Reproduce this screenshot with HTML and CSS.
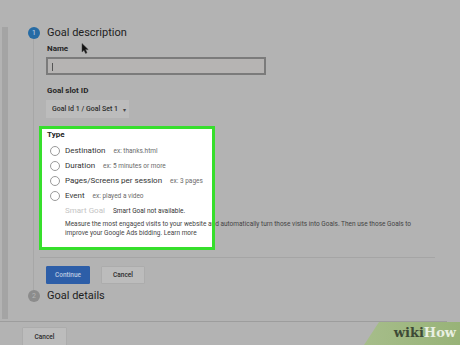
FILE: index.html
```html
<!DOCTYPE html>
<html lang="en">

<head>
    <meta charset="UTF-8">
    <meta name="viewport" content="width=device-width, initial-scale=1.0">
    <title>Goal setup</title>
    <link rel="stylesheet" href="styles.css">
</head>

<body>
    <div class="screen">
        <div class="panel">
            <div class="step-head first">
                <span class="num active">1</span>
                <h2>Goal description</h2>
            </div>
            <div class="step-body">
                <div class="field-label">Name</div>
                <div class="text-input"><span class="caret"></span></div>

                <div class="field-label slot">Goal slot ID</div>
                <div class="select">Goal Id 1 / Goal Set 1 <span class="arrow">&#9662;</span></div>

                <div class="type-box">
                    <div class="field-label">Type</div>
                    <ul class="options">
                        <li><span class="radio"></span><span class="opt">Destination</span><span class="ex">ex: thanks.html</span></li>
                        <li><span class="radio"></span><span class="opt">Duration</span><span class="ex">ex: 5 minutes or more</span></li>
                        <li><span class="radio"></span><span class="opt">Pages/Screens per session</span><span class="ex">ex: 3 pages</span></li>
                        <li><span class="radio"></span><span class="opt">Event</span><span class="ex">ex: played a video</span></li>
                    </ul>
                    <div class="smart">
                        <span class="smart-title">Smart Goal</span>
                        <span class="smart-note">Smart Goal not available.</span>
                    </div>
                    <p class="smart-desc">Measure the most engaged visits to your website and automatically turn those visits into Goals. Then use those Goals to improve your Google Ads bidding. Learn more</p>
                </div>

                <div class="divider"></div>

                <div class="actions">
                    <button class="btn primary">Continue</button>
                    <button class="btn">Cancel</button>
                </div>
            </div>
            <div class="step-head">
                <span class="num">2</span>
                <h2>Goal details</h2>
            </div>
        </div>
        <div class="rule"></div>
        <button class="btn footer-cancel">Cancel</button>
    </div>

    <!-- mouse pointer -->
    <svg class="pointer" width="8" height="11" viewBox="0 0 8 11">
        <path d="M1 0.5 L1 9 L3 7.2 L4.6 10.5 L6 9.8 L4.5 6.6 L7.2 6.6 Z" fill="#111" stroke="#444" stroke-width="0.5"/>
    </svg>

    <div class="wikihow"><span class="wiki">wiki</span><span class="how">How</span></div>
</body>

</html>
```

FILE: styles.css
```css
* {
    box-sizing: border-box;
}

body {
    margin: 0;
    width: 460px;
    height: 345px;
    overflow: hidden;
    background-color: #b3b3b3;
    color: #262626;
    font-family: Roboto, "Liberation Sans", Arial, sans-serif;
    position: relative;
}

.screen {
    padding-top: 13px;
}

.panel {
    margin-left: 2px;
    border-left: 6px solid #a4a4a4;
    width: 445px;
    height: 292px;
}

.step-head {
    display: flex;
    align-items: center;
    height: 12px;
    margin-left: 20px;
}

.step-head.first {
    margin-top: 14px;
}

.step-head h2 {
    margin: 0 0 0 7px;
    font-size: 11px;
    font-weight: 400;
    color: #1e1e1e;
    line-height: 12px;
}

.num {
    width: 12px;
    height: 12px;
    border-radius: 50%;
    background-color: #8c8c8c;
    color: #b6b6b6;
    font-size: 7px;
    display: flex;
    align-items: center;
    justify-content: center;
}

.num.active {
    background-color: #266ba4;
    color: #c9d8e8;
}

.step-body {
    margin-left: 25px;
    border-left: 1px solid #a7a7a7;
    padding: 5px 0 6px 13px;
}

.field-label {
    font-size: 8px;
    font-weight: 700;
    line-height: 10px;
    color: #262626;
}

.field-label.slot {
    margin-top: 11px;
}

.text-input {
    margin: 3px 0 0 -1px;
    width: 220px;
    height: 18px;
    border: 2px solid #7b7b7b;
    background-color: #b6b4b3;
    padding: 4px 0 0 4px;
}

.caret {
    display: block;
    width: 1px;
    height: 8px;
    background-color: #555;
}

.select {
    margin: 4px 0 0 -1px;
    width: 83px;
    height: 18px;
    background-color: #bcbcbc;
    font-size: 7px;
    font-weight: 500;
    color: #2d2d2d;
    display: flex;
    align-items: center;
    padding-left: 6px;
    white-space: nowrap;
}

.select .arrow {
    margin-left: 5px;
    font-size: 6px;
    color: #444;
}

.type-box {
    position: relative;
    margin: 8px 0 0 -8px;
    width: 176px;
    height: 124px;
    background-color: #fff;
    padding: 4px 0 0 8px;
}

.type-box::after {
    content: '';
    position: absolute;
    inset: 0;
    border: 3px solid #36df2c;
}

.options {
    list-style: none;
    margin: 3px 0 0 0;
    padding: 0;
}

.options li {
    display: flex;
    align-items: center;
    height: 15px;
    white-space: nowrap;
}

.radio {
    width: 10px;
    height: 10px;
    margin-left: 3px;
    border: 1px solid #9a9a9a;
    border-radius: 50%;
    flex-shrink: 0;
}

.opt {
    margin-left: 5px;
    font-size: 8px;
    color: #333;
}

.ex {
    margin-left: 8px;
    font-size: 6.5px;
    color: #6a6a6a;
}

.smart {
    display: flex;
    align-items: center;
    height: 15px;
    padding-left: 18px;
    white-space: nowrap;
}

.smart-title {
    font-size: 8px;
    color: #c4c4c4;
}

.smart-note {
    margin-left: 8px;
    font-size: 6.5px;
    color: #333;
}

.smart-desc {
    margin: 2px 0 0 18px;
    width: 360px;
    font-size: 6.5px;
    line-height: 9px;
    color: #444;
}

.divider {
    margin: 7px 0 0 -7px;
    width: 395px;
    height: 1px;
    background-color: #a5a5a5;
}

.actions {
    display: flex;
    gap: 11px;
    margin: 8px 0 0 -1px;
}

.btn {
    width: 44px;
    height: 18px;
    border: 1px solid #acacac;
    background-color: #bcbcbc;
    color: #2b2b2b;
    font-family: Roboto, "Liberation Sans", Arial, sans-serif;
    font-size: 6.5px;
    font-weight: 500;
    padding: 0;
    border-radius: 1px;
}

.btn.primary {
    background-color: #2d5ea8;
    border-color: #2d5ea8;
    color: #b9c9e1;
}

.rule {
    margin-top: 2px;
    width: 447px;
    height: 1px;
    background-color: #9d9d9d;
}

.footer-cancel {
    margin: 5px 0 0 22px;
    width: 45px;
    height: 19px;
}

.pointer {
    position: absolute;
    left: 81px;
    top: 43px;
}

.wikihow {
    position: absolute;
    right: 0;
    bottom: 0;
    width: 96px;
    height: 23px;
    clip-path: polygon(15px 0, 100% 0, 100% 100%, 0 100%);
    background: linear-gradient(to right, #a6bd8a, #98b378);
    font-family: "DejaVu Serif", "Liberation Serif", serif;
    font-weight: 700;
    font-size: 13px;
    text-align: right;
    padding: 3px 4px 0 0;
}

.wiki {
    color: #3d4a36;
}

.how {
    color: #e9f0e2;
}
```
